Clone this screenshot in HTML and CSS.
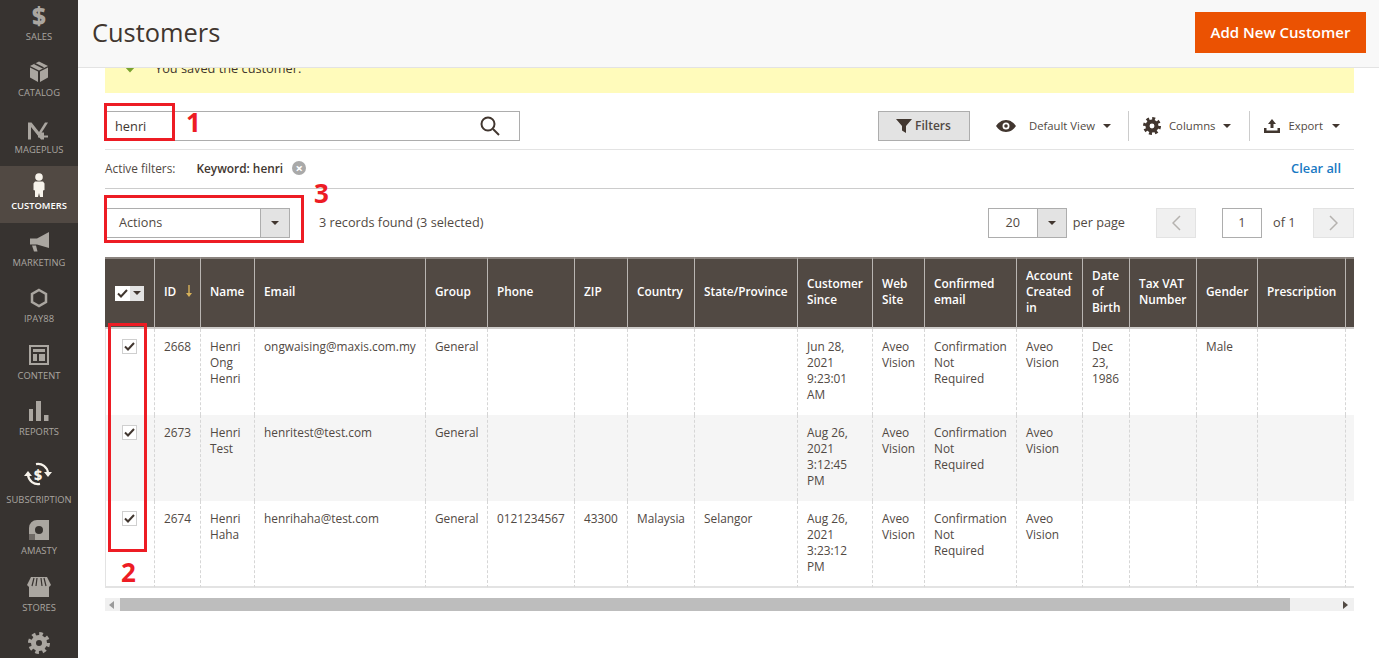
FILE: index.html
```html
<!DOCTYPE html>
<html lang="en">
<head>
<meta charset="utf-8">
<title>Customers</title>
<link rel="stylesheet" href="styles.css">
</head>
<body>
<div class="page">
  <nav class="sidebar">
    <a class="nav-item"><span class="nav-icon dollar">$</span><span class="nav-label">Sales</span></a>
    <a class="nav-item"><span class="nav-icon"><svg width="24" height="24" viewBox="0 0 24 24"><path class="f" d="M12 1.500l9 4.500-9 4.500L3 6z"/><path class="s2" d="M7.500 3.500l9 4.500"/><path class="f" d="M3 7.500l8 4V22l-8-4.500zM21 7.500l-8 4V22l8-4.500z"/></svg></span><span class="nav-label">Catalog</span></a>
    <a class="nav-item"><span class="nav-icon"><svg width="26" height="24" viewBox="0 0 26 24"><path class="f" d="M2 5.500h3.500L17 20l-2 2.500L5 10v12.500H2z"/><path class="f" d="M19 5.500h3L13.500 19l-2-1.500z"/><path class="f" d="M15 15.500h3v3h4v2h-4v2h-3v-2h-3v-2h3z"/></svg></span><span class="nav-label">Mageplus</span></a>
    <a class="nav-item active"><span class="nav-icon"><svg width="16" height="26" viewBox="0 0 16 26"><circle class="w" cx="8" cy="5" r="3.800"/><path class="w" d="M4 9.500h8l1.500 2v6.500l-1.500.5V25h-3l-1-4-1 4H4v-6.500L2.500 18v-6.500z"/></svg></span><span class="nav-label">Customers</span></a>
    <a class="nav-item"><span class="nav-icon"><svg width="22" height="22" viewBox="0 0 22 22"><path class="f" d="M21 1v16L9 13.500H2v-6h7z"/><path class="f" d="M4 14.500h4l1.500 6H6z"/></svg></span><span class="nav-label">Marketing</span></a>
    <a class="nav-item"><span class="nav-icon"><svg width="18" height="20" viewBox="0 0 18 20"><path class="o" d="M9 2l7 4v8l-7 4-7-4V6z"/></svg></span><span class="nav-label">iPay88</span></a>
    <a class="nav-item"><span class="nav-icon"><svg width="20" height="20" viewBox="0 0 20 20"><path class="f" d="M0 0h20v20H0zM2 2v16h16V2z"/><path class="f" d="M4 4h12v3H4zM4 9h4v7H4zM10 9h6v7h-6z"/></svg></span><span class="nav-label">Content</span></a>
    <a class="nav-item"><span class="nav-icon"><svg width="20" height="20" viewBox="0 0 20 20"><path class="f" d="M0 8h4v12H0zM7 0h5v20H7zM15 14h4.500v6H15z"/></svg></span><span class="nav-label">Reports</span></a>
    <a class="nav-item nav-tall"><span class="nav-icon nav-icon-tall"><svg width="30" height="26" viewBox="0 0 30 26"><path class="ow" d="M12 2.200a10 10 0 0 1 12 9"/><path class="ow" d="M16 21.800a10 10 0 0 1-12-9"/><path class="w" d="M20 10h8l-4 5zM0 14h8L4 9z"/><text class="sub-dollar" x="14" y="17.500">$</text></svg></span><span class="nav-label">Subscription</span></a>
    <a class="nav-item"><span class="nav-icon"><svg width="22" height="22" viewBox="0 0 22 22"><path class="f" fill-rule="evenodd" d="M9 1h12v20H7l-6-6v-6a8 8 0 0 1 8-8zM11 7a4 4 0 1 0 0 8 4 4 0 0 0 0-8z"/><path class="d" d="M1 15h6v6H1z"/></svg></span><span class="nav-label">Amasty</span></a>
    <a class="nav-item"><span class="nav-icon"><svg width="24" height="20" viewBox="0 0 24 20"><path class="f" d="M4 0h16l4 8-2 2v10H2V10L0 8z"/><path class="s" d="M7 1L5 9M10 1L9 9M14 1l1 8M17 1l2 8"/></svg></span><span class="nav-label">Stores</span></a>
    <a class="nav-item"><span class="nav-icon"><svg width="22" height="22" viewBox="0 0 22 22"><use href="#gear"/></svg></span></a>
  </nav>

  <main class="main">
    <header class="page-header">
      <h1 class="page-title">Customers</h1>
      <button class="primary-btn">Add New Customer</button>
    </header>

    <div class="content">
      <div class="notice">
        <svg class="notice-icon" width="12" height="10" viewBox="0 0 12 10"><path d="M0 3l2-2 4 4 4-4 2 2-6 6.500z"/></svg>
        <span>You saved the customer.</span>
      </div>

      <div class="toolbar">
        <div class="search">
          <span>henri</span>
          <svg width="20" height="20" viewBox="0 0 20 20"><circle class="search-ring" cx="8" cy="8" r="6.500"/><path class="search-ring" d="M13 13l6 6"/></svg>
        </div>
        <div class="toolbar-right">
          <button class="filters-btn"><svg width="16" height="14" viewBox="0 0 16 14"><path class="ink" d="M0 0h16L10 7v7L6 11.500V7z"/></svg>Filters</button>
          <div class="tool tool-view"><svg width="20" height="12" viewBox="0 0 20 12"><path class="ink" fill-rule="evenodd" d="M10 0c4.500 0 8 3 10 6-2 3-5.500 6-10 6S2 9 0 6c2-3 5.500-6 10-6zm0 2.500a3.500 3.500 0 1 0 0 7 3.500 3.500 0 0 0 0-7z"/><circle class="ink" cx="10" cy="6" r="1.800"/></svg><span class="tool-text">Default View</span><i class="caret"></i></div>
          <div class="tool tool-columns"><svg width="18" height="18" viewBox="0 0 22 22"><use href="#gear-dark"/></svg><span class="tool-text">Columns</span><i class="caret"></i></div>
          <div class="tool tool-export"><svg width="16" height="14" viewBox="0 0 16 14"><path class="ink" d="M8 0l4 5H9.500v4h-3V5H4zM0 9h2.500v2.500h11V9H16v5H0z"/></svg><span class="tool-text">Export</span><i class="caret"></i></div>
        </div>
      </div>

      <div class="filters-row">
        <span class="filters-label">Active filters:</span>
        <strong class="filter-chip">Keyword: henri</strong>
        <span class="chip-x">×</span>
        <a class="clear-all">Clear all</a>
      </div>

      <div class="actions-row">
        <div class="select select-actions"><span class="select-value">Actions</span><span class="select-btn"><i class="caret"></i></span></div>
        <span class="records">3 records found (3 selected)</span>
        <div class="pager">
          <div class="select select-size"><span class="select-value">20</span><span class="select-btn"><i class="caret"></i></span></div>
          <span class="per-page">per page</span>
          <span class="page-btn page-prev"><svg width="9" height="16" viewBox="0 0 9 16"><path class="chev" d="M8 1L1 8l7 7"/></svg></span>
          <span class="page-input">1</span>
          <span class="page-of">of 1</span>
          <span class="page-btn"><svg width="9" height="16" viewBox="0 0 9 16"><path class="chev" d="M1 1l7 7-7 7"/></svg></span>
        </div>
      </div>

      <div class="table-wrap">
        <table class="grid">
          <colgroup>
            <col class="c-check"><col class="c-id"><col class="c-name"><col class="c-email"><col class="c-group"><col class="c-phone"><col class="c-zip"><col class="c-country"><col class="c-state"><col class="c-since"><col class="c-web"><col class="c-conf"><col class="c-acct"><col class="c-dob"><col class="c-tax"><col class="c-gender"><col class="c-pres"><col class="c-last">
          </colgroup>
          <thead>
            <tr>
              <th class="th-check"><span class="head-check"><span class="head-box"><svg width="13" height="11" viewBox="0 0 13 11"><path class="tick" d="M2 5.500L5 8.500 11 2"/></svg></span><span class="head-drop"><i class="caret"></i></span></span></th>
              <th class="th-id">ID <svg class="sort" width="6" height="12" viewBox="0 0 6 12"><path class="sort-p" d="M2.300 0h1.400v8H6l-3 4-3-4h2.300z"/></svg></th>
              <th>Name</th><th>Email</th><th>Group</th><th>Phone</th><th>ZIP</th><th>Country</th><th>State/Province</th><th>Customer Since</th><th>Web Site</th><th>Confirmed email</th><th>Account Created in</th><th>Date of Birth</th><th>Tax VAT Number</th><th>Gender</th><th>Prescription</th><th></th>
            </tr>
          </thead>
          <tbody>
            <tr>
              <td class="td-check"><span class="box"><svg width="13" height="11" viewBox="0 0 13 11"><path class="tick" d="M2 5.500L5 8.500 11 2"/></svg></span></td>
              <td>2668</td><td>Henri Ong Henri</td><td>ongwaising@maxis.com.my</td><td>General</td><td></td><td></td><td></td><td></td><td>Jun 28, 2021 9:23:01 AM</td><td>Aveo Vision</td><td>Confirmation Not Required</td><td>Aveo Vision</td><td>Dec 23, 1986</td><td></td><td>Male</td><td></td><td></td>
            </tr>
            <tr class="even">
              <td class="td-check"><span class="box"><svg width="13" height="11" viewBox="0 0 13 11"><path class="tick" d="M2 5.500L5 8.500 11 2"/></svg></span></td>
              <td>2673</td><td>Henri Test</td><td>henritest@test.com</td><td>General</td><td></td><td></td><td></td><td></td><td>Aug 26, 2021 3:12:45 PM</td><td>Aveo Vision</td><td>Confirmation Not Required</td><td>Aveo Vision</td><td></td><td></td><td></td><td></td><td></td>
            </tr>
            <tr>
              <td class="td-check"><span class="box"><svg width="13" height="11" viewBox="0 0 13 11"><path class="tick" d="M2 5.500L5 8.500 11 2"/></svg></span></td>
              <td>2674</td><td>Henri Haha</td><td>henrihaha@test.com</td><td>General</td><td>0121234567</td><td>43300</td><td>Malaysia</td><td>Selangor</td><td>Aug 26, 2021 3:23:12 PM</td><td>Aveo Vision</td><td>Confirmation Not Required</td><td>Aveo Vision</td><td></td><td></td><td></td><td></td><td></td>
            </tr>
          </tbody>
        </table>
      </div>

      <div class="scrollbar">
        <svg width="5" height="8" viewBox="0 0 5 8"><path class="arrow-l" d="M5 0v8L0 4z"/></svg>
        <span class="thumb"></span>
        <svg width="5" height="8" viewBox="0 0 5 8"><path class="arrow-r" d="M0 0v8l5-4z"/></svg>
      </div>
    </div>
  </main>

  <span class="mark mark-search"></span><span class="mark-num num-1">1</span>
  <span class="mark mark-checks"></span><span class="mark-num num-2">2</span>
  <span class="mark mark-actions"></span><span class="mark-num num-3">3</span>

  <svg class="defs" width="0" height="0">
    <defs>
      <g id="gear"><circle class="gear-t" cx="11" cy="11" r="9"/><circle class="gear-r" cx="11" cy="11" r="5.500"/></g>
      <g id="gear-dark"><circle class="gear-t gear-dark" cx="11" cy="11" r="9"/><circle class="gear-r gear-dark" cx="11" cy="11" r="5.500"/></g>
    </defs>
  </svg>
</div>
</body>
</html>
```

FILE: styles.css
```css
* { box-sizing: border-box; }
html, body { margin: 0; height: 100%; }
body { font-family: "Open Sans", "Liberation Sans", sans-serif; font-size: 13px; line-height: 16px; color: #41362f; background: #fff; overflow: hidden; }
.page { position: relative; display: flex; width: 1379px; height: 658px; overflow: hidden; }
.defs { position: absolute; }

/* sidebar */
.sidebar { flex: 0 0 78px; background: #373330; height: 658px; overflow: hidden; padding-top: 0; margin: 0; }
.nav-item { display: flex; flex-direction: column; align-items: center; height: 56.5px; padding-top: 4px; color: #aaa6a0; }
.nav-item:first-child { margin-top: -3.5px; }
.nav-tall { height: 62.5px; padding-top: 7px; }
.nav-icon { display: flex; align-items: center; justify-content: center; height: 30px; }
.nav-icon-tall { height: 38px; }
.nav-label { font-size: 9.400px; line-height: 12px; text-transform: uppercase; white-space: nowrap; }
.active { background: #514943; color: #f7f3eb; }
.active .nav-label { font-weight: 600; color: #fff; }
.dollar { font-size: 24px; line-height: 30px; font-weight: 800; color: #aaa6a0; }
.f { fill: #aaa6a0; fill-rule: evenodd; }
.d { fill: #6f6a66; }
.w { fill: #f7f3eb; }
.o { fill: none; stroke: #aaa6a0; stroke-width: 2.500; }
.ow { fill: none; stroke: #f7f3eb; stroke-width: 2.200; }
.s { fill: none; stroke: #373330; stroke-width: 1.200; }
.s2 { fill: none; stroke: #373330; stroke-width: 1.500; }
.sub-dollar { font-family: "Open Sans", sans-serif; font-size: 14px; font-weight: 800; fill: #f7f3eb; text-anchor: middle; }
.gear-t { fill: none; stroke: #aaa6a0; stroke-width: 4; stroke-dasharray: 3.530 3.530; }
.gear-r { fill: none; stroke: #aaa6a0; stroke-width: 5; }
.gear-dark { stroke: #41362f; }

/* header */
.main { flex: 1 1 auto; min-width: 0; }
.page-header { position: relative; z-index: 2; display: flex; align-items: center; justify-content: space-between; height: 68px; padding: 0 13px 2px 14px; background: #f8f8f8; border-bottom: 1px solid #e3e3e3; }
.page-title { margin: 0 0 1px; font-size: 25.400px; line-height: 32px; font-weight: 400; color: #41362f; }
.primary-btn { width: 171px; height: 41px; border: 0; background: #eb5202; color: #fff; font: 600 15px/20px "Open Sans", sans-serif; padding: 0 0 1px; }

.content { padding: 0 25px 0 27px; }
.notice { display: flex; align-items: center; margin-top: -25px; height: 50px; padding: 0 0 0 19px; background: #fffbbb; font-size: 12.750px; color: #41362f; }
.notice-icon { margin-right: 19px; fill: #79a22e; }

/* toolbar */
.toolbar { display: flex; justify-content: space-between; margin-top: 18px; height: 39px; padding-bottom: 8px; border-bottom: 1px solid #e3e3e3; }
.search { display: flex; align-items: center; justify-content: space-between; width: 415px; height: 30px; padding: 0 19px 0 9px; border: 1px solid #adadad; background: #fff; font-size: 12.800px; }
.search-ring { fill: none; stroke: #41362f; stroke-width: 2; }
.toolbar-right { display: flex; align-items: center; height: 30px; padding-right: 14px; }
.filters-btn { display: flex; align-items: center; justify-content: center; gap: 3px; width: 92px; height: 30px; margin-right: 26px; padding: 0 1px 0 0; background: #e3e3e3; border: 1px solid #adadad; color: #514943; font: 600 12px/16px "Open Sans", sans-serif; }
.ink { fill: #41362f; }
.tool { display: flex; align-items: center; height: 30px; color: #514943; font-size: 11.300px; }
.tool-text { margin: 0 8px 0 13px; }
.tool-view { padding-right: 17px; border-right: 1px solid #ccc; }
.tool-columns { padding: 0 18px 0 14px; border-right: 1px solid #ccc; }
.tool-columns .tool-text { margin: 0 8px 0 8px; }
.tool-export { padding-left: 14px; }
.tool-export .tool-text { margin: 0 9px 0 8px; }
.caret { display: block; width: 0; height: 0; border-style: solid; border-width: 4px 4px 0; border-color: #41362f transparent transparent; }

/* filters */
.filters-row { display: flex; align-items: center; height: 39px; padding: 0 13px 2px 0; border-bottom: 1px solid #ccc; font-size: 11.850px; }
.filters-label { margin-right: 21px; color: #514943; }
.filter-chip { font-weight: 600; color: #41362f; }
.chip-x { display: flex; align-items: center; justify-content: center; width: 14px; height: 14px; margin-left: 9px; border-radius: 50%; background: #a9a9a9; color: #fff; font-size: 13px; font-weight: 700; line-height: 14px; }
.clear-all { margin-left: auto; color: #1979c3; font-size: 12.800px; font-weight: 600; }

/* actions */
.actions-row { display: flex; align-items: center; margin-top: 19px; height: 30px; font-size: 12.700px; }
.select { display: flex; height: 30px; border: 1px solid #adadad; background: #fff; color: #514943; }
.select-value { flex: 1 1 auto; line-height: 26px; }
.select-btn { display: flex; align-items: center; justify-content: center; width: 29px; background: #e3e3e3; border-left: 1px solid #adadad; }
.select-actions { width: 185px; }
.select-actions .select-value { padding-left: 13px; }
.records { margin: 0 0 2px 29px; color: #514943; }
.pager { display: flex; align-items: center; margin-left: auto; }
.select-size { width: 79px; }
.select-size .select-value { text-align: center; }
.per-page { margin: 0 31px 2px 6px; color: #514943; }
.page-btn { display: flex; align-items: center; justify-content: center; width: 41px; height: 30px; background: #f0f0f0; border: 1px solid #e3e3e3; }
.page-prev { margin-right: 26px; width: 40px; }
.chev { fill: none; stroke: #b5b2af; stroke-width: 1.500; }
.page-input { width: 40px; height: 30px; border: 1px solid #adadad; text-align: center; line-height: 26px; color: #514943; }
.page-of { width: 51px; padding: 0 0 2px 11px; color: #514943; }

/* table */
.table-wrap { margin-top: 19px; width: 1249px; overflow: hidden; }
.grid { table-layout: fixed; width: 1300px; border-collapse: separate; border-spacing: 0; }
.c-check { width: 49px; } .c-id { width: 46px; } .c-name { width: 54px; } .c-email { width: 171px; }
.c-group { width: 62px; } .c-phone { width: 87px; } .c-zip { width: 53px; } .c-country { width: 67px; }
.c-state { width: 103px; } .c-since { width: 75px; } .c-web { width: 52px; } .c-conf { width: 92px; }
.c-acct { width: 66px; } .c-dob { width: 47px; } .c-tax { width: 67px; } .c-gender { width: 61px; }
.c-pres { width: 88px; } .c-last { width: 60px; }
.grid th { height: 72px; padding: 0 9px 4px; background: #514943; color: #fff; font-size: 11.850px; font-weight: 600; line-height: 16px; text-align: left; border-top: 2px solid #8a837e; border-bottom: 2px solid #cfcdcb; border-left: 1px solid #b9b5b2; }
.grid th:first-child { border-left: 0; padding: 0; }
.grid .th-id { white-space: nowrap; }
.grid td { height: 86px; padding: 9px 9px 0; vertical-align: top; color: #514943; font-size: 11.850px; line-height: 16px; border-left: 1px dashed #d6d6d6; }
.grid td:first-child { border-left: 1px solid #e3e3e3; padding: 10px 0 0 16px; }
.grid tbody tr:last-child td { border-bottom: 2px solid #e3e3e3; height: 87px; }
.even td { background: #f5f5f5; }
.sort { margin-left: 7px; vertical-align: -1px; }
.sort-p { fill: #d8b25a; }
.head-check { display: flex; margin-left: 10px; width: 29px; height: 15px; }
.head-box { display: flex; align-items: center; justify-content: center; width: 15px; background: #fff; }
.head-drop { display: flex; align-items: center; justify-content: center; width: 14px; background: #e3e3e3; }
.box { display: flex; align-items: center; justify-content: center; width: 15px; height: 15px; background: #fff; border: 1px solid #cfcfcf; }
.tick { fill: none; stroke: #41362f; stroke-width: 2; }

/* horizontal scrollbar */
.scrollbar { display: flex; align-items: center; margin-top: 10px; width: 1249px; height: 13px; padding: 0 6px 0 4px; background: #f0f0f0; }
.thumb { width: 1170px; height: 13px; margin: 0 auto 0 6px; background: #bdbdbd; }
.arrow-l { fill: #9a9a9a; }
.arrow-r { fill: #514943; }

/* red annotations drawn on top of the screenshot */
.mark { position: absolute; z-index: 5; border: 3px solid #ed1c24; }
.mark-search { left: 104px; top: 103px; width: 71px; height: 38px; }
.mark-checks { left: 108px; top: 323px; width: 39px; height: 229px; }
.mark-actions { left: 104px; top: 195px; width: 200px; height: 48px; }
.mark-num { position: absolute; z-index: 5; color: #ed1c24; font-size: 26px; font-weight: 700; line-height: 30px; }
.num-1 { left: 186px; top: 107px; }
.num-2 { left: 121px; top: 557px; }
.num-3 { left: 314px; top: 178px; }
```
